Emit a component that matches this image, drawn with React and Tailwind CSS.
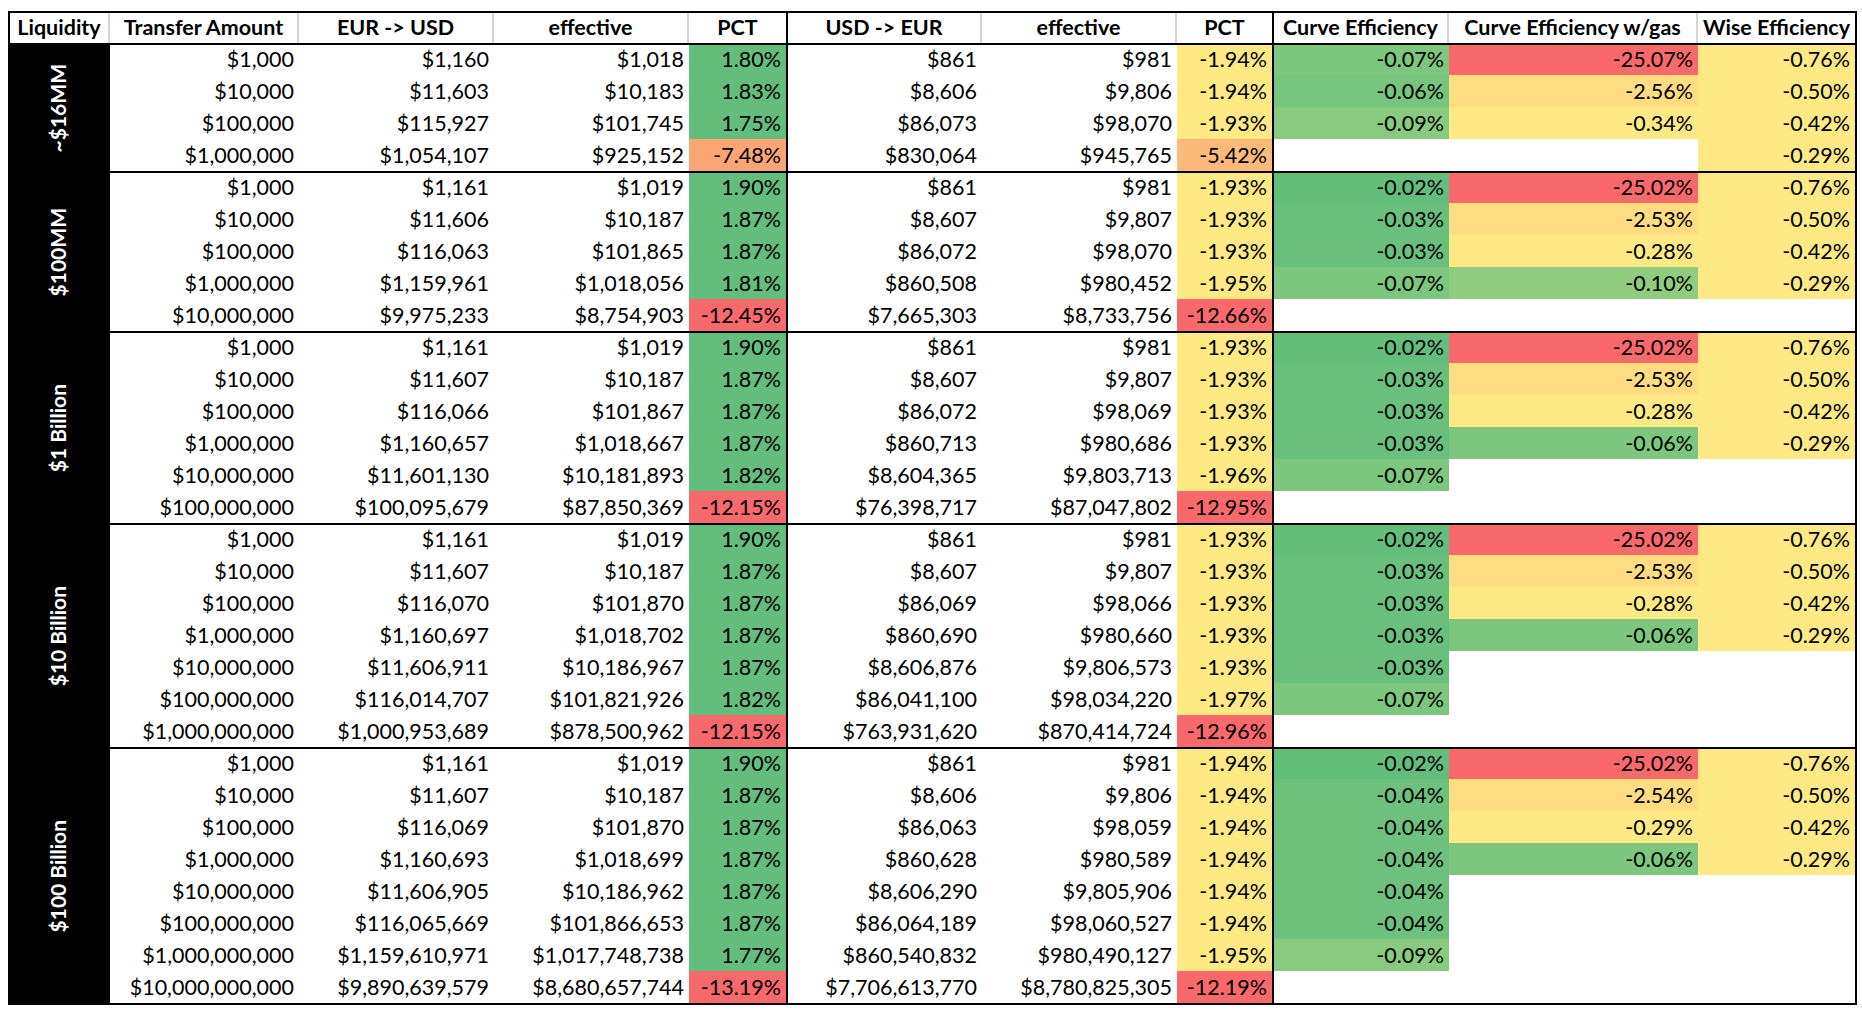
import React from 'react';

const G1 = 'bg-[#63be7b]';
const G2 = 'bg-[#69c07c]';
const G3 = 'bg-[#6ec17c]';
const G4 = 'bg-[#77c47d]';
const G5 = 'bg-[#7cc67d]';
const G6 = 'bg-[#88ca7e]';
const G7 = 'bg-[#90cc7e]';
const Y = 'bg-[#ffe984]';
const YO = 'bg-[#fedc81]';
const O1 = 'bg-[#f9a575]';
const O2 = 'bg-[#fbb97a]';
const R = 'bg-[#f8696b]';

const CURVE = { '-0.02%': G1, '-0.03%': G2, '-0.04%': G3, '-0.06%': G4, '-0.07%': G5, '-0.09%': G6 };
const GAS = {
  '-25.07%': R, '-25.02%': R, '-2.56%': YO, '-2.53%': YO, '-2.54%': YO,
  '-0.34%': Y, '-0.28%': Y, '-0.29%': Y, '-0.10%': G7, '-0.06%': G5,
};

function pct1(s) {
  const v = parseFloat(s);
  if (v > 0) return G1;
  if (v > -10) return O1;
  return R;
}
function pct2(s) {
  const v = parseFloat(s);
  if (v > -3) return Y;
  if (v > -10) return O2;
  return R;
}

const GROUPS = [
  {
    label: '~$16MM',
    rows: [
      ['$1,000', '$1,160', '$1,018', '1.80%', '$861', '$981', '-1.94%', '-0.07%', '-25.07%', '-0.76%'],
      ['$10,000', '$11,603', '$10,183', '1.83%', '$8,606', '$9,806', '-1.94%', '-0.06%', '-2.56%', '-0.50%'],
      ['$100,000', '$115,927', '$101,745', '1.75%', '$86,073', '$98,070', '-1.93%', '-0.09%', '-0.34%', '-0.42%'],
      ['$1,000,000', '$1,054,107', '$925,152', '-7.48%', '$830,064', '$945,765', '-5.42%', '', '', '-0.29%'],
    ],
  },
  {
    label: '$100MM',
    rows: [
      ['$1,000', '$1,161', '$1,019', '1.90%', '$861', '$981', '-1.93%', '-0.02%', '-25.02%', '-0.76%'],
      ['$10,000', '$11,606', '$10,187', '1.87%', '$8,607', '$9,807', '-1.93%', '-0.03%', '-2.53%', '-0.50%'],
      ['$100,000', '$116,063', '$101,865', '1.87%', '$86,072', '$98,070', '-1.93%', '-0.03%', '-0.28%', '-0.42%'],
      ['$1,000,000', '$1,159,961', '$1,018,056', '1.81%', '$860,508', '$980,452', '-1.95%', '-0.07%', '-0.10%', '-0.29%'],
      ['$10,000,000', '$9,975,233', '$8,754,903', '-12.45%', '$7,665,303', '$8,733,756', '-12.66%', '', '', ''],
    ],
  },
  {
    label: '$1 Billion',
    rows: [
      ['$1,000', '$1,161', '$1,019', '1.90%', '$861', '$981', '-1.93%', '-0.02%', '-25.02%', '-0.76%'],
      ['$10,000', '$11,607', '$10,187', '1.87%', '$8,607', '$9,807', '-1.93%', '-0.03%', '-2.53%', '-0.50%'],
      ['$100,000', '$116,066', '$101,867', '1.87%', '$86,072', '$98,069', '-1.93%', '-0.03%', '-0.28%', '-0.42%'],
      ['$1,000,000', '$1,160,657', '$1,018,667', '1.87%', '$860,713', '$980,686', '-1.93%', '-0.03%', '-0.06%', '-0.29%'],
      ['$10,000,000', '$11,601,130', '$10,181,893', '1.82%', '$8,604,365', '$9,803,713', '-1.96%', '-0.07%', '', ''],
      ['$100,000,000', '$100,095,679', '$87,850,369', '-12.15%', '$76,398,717', '$87,047,802', '-12.95%', '', '', ''],
    ],
  },
  {
    label: '$10 Billion',
    rows: [
      ['$1,000', '$1,161', '$1,019', '1.90%', '$861', '$981', '-1.93%', '-0.02%', '-25.02%', '-0.76%'],
      ['$10,000', '$11,607', '$10,187', '1.87%', '$8,607', '$9,807', '-1.93%', '-0.03%', '-2.53%', '-0.50%'],
      ['$100,000', '$116,070', '$101,870', '1.87%', '$86,069', '$98,066', '-1.93%', '-0.03%', '-0.28%', '-0.42%'],
      ['$1,000,000', '$1,160,697', '$1,018,702', '1.87%', '$860,690', '$980,660', '-1.93%', '-0.03%', '-0.06%', '-0.29%'],
      ['$10,000,000', '$11,606,911', '$10,186,967', '1.87%', '$8,606,876', '$9,806,573', '-1.93%', '-0.03%', '', ''],
      ['$100,000,000', '$116,014,707', '$101,821,926', '1.82%', '$86,041,100', '$98,034,220', '-1.97%', '-0.07%', '', ''],
      ['$1,000,000,000', '$1,000,953,689', '$878,500,962', '-12.15%', '$763,931,620', '$870,414,724', '-12.96%', '', '', ''],
    ],
  },
  {
    label: '$100 Billion',
    rows: [
      ['$1,000', '$1,161', '$1,019', '1.90%', '$861', '$981', '-1.94%', '-0.02%', '-25.02%', '-0.76%'],
      ['$10,000', '$11,607', '$10,187', '1.87%', '$8,606', '$9,806', '-1.94%', '-0.04%', '-2.54%', '-0.50%'],
      ['$100,000', '$116,069', '$101,870', '1.87%', '$86,063', '$98,059', '-1.94%', '-0.04%', '-0.29%', '-0.42%'],
      ['$1,000,000', '$1,160,693', '$1,018,699', '1.87%', '$860,628', '$980,589', '-1.94%', '-0.04%', '-0.06%', '-0.29%'],
      ['$10,000,000', '$11,606,905', '$10,186,962', '1.87%', '$8,606,290', '$9,805,906', '-1.94%', '-0.04%', '', ''],
      ['$100,000,000', '$116,065,669', '$101,866,653', '1.87%', '$86,064,189', '$98,060,527', '-1.94%', '-0.04%', '', ''],
      ['$1,000,000,000', '$1,159,610,971', '$1,017,748,738', '1.77%', '$860,540,832', '$980,490,127', '-1.95%', '-0.09%', '', ''],
      ['$10,000,000,000', '$9,890,639,579', '$8,680,657,744', '-13.19%', '$7,706,613,770', '$8,780,825,305', '-12.19%', '', '', ''],
    ],
  },
];

const W = [
  'w-[189px]', 'w-[195px]', 'w-[195px]', 'w-[99px]', 'w-[194px]',
  'w-[195px]', 'w-[97px]', 'w-[175px]', 'w-[249px]', 'w-[157px]',
];

const HEADERS = [
  'Transfer Amount', 'EUR -> USD', 'effective', 'PCT', 'USD -> EUR',
  'effective', 'PCT', 'Curve Efficiency', 'Curve Efficiency w/gas', 'Wise Efficiency',
];

function bgFor(i, v) {
  if (!v) return '';
  if (i === 3) return pct1(v);
  if (i === 6) return pct2(v);
  if (i === 7) return CURVE[v] || G3;
  if (i === 8) return GAS[v] || Y;
  if (i === 9) return Y;
  return '';
}

function borderFor(i) {
  if (i === 3 || i === 6) return 'border-r-2 border-black';
  return '';
}

function headerBorder(i) {
  if (i === 3 || i === 6) return 'border-r-2 border-black';
  if (i === 9) return '';
  return 'border-r-2 border-[#d6d6d6]';
}

function Row({ cells, first }) {
  return (
    <div className={`flex ${first ? 'h-[30px]' : 'h-[32px]'}`}>
      {cells.map((v, i) => (
        <div
          key={i}
          className={`${W[i]} ${bgFor(i, v)} ${borderFor(i)} shrink-0 flex items-end justify-end pr-[5px] pb-[3px] leading-[26px] whitespace-nowrap`}
        >
          {v}
        </div>
      ))}
    </div>
  );
}

function Group({ group }) {
  return (
    <div className="flex border-t-2 border-black">
      <div className="w-[100px] shrink-0 bg-black flex items-center justify-center pr-[4px]">
        <span className="[writing-mode:vertical-rl] rotate-180 text-white font-bold text-[21px] whitespace-nowrap leading-[24px]">
          {group.label}
        </span>
      </div>
      <div className="flex flex-col">
        {group.rows.map((r, i) => (
          <Row key={i} cells={r} first={i === 0} />
        ))}
      </div>
    </div>
  );
}

export default function App() {
  return (
    <div className="w-[1862px] h-[1018px] bg-white pt-[11px] pl-[8px] font-['Lato','Liberation_Sans',sans-serif] text-[21.5px] text-black overflow-hidden">
      <div className="w-[1849px] border-2 border-black">
        <div className="flex h-[30px] font-bold text-[21.5px]">
          <div className="w-[100px] shrink-0 border-r-2 border-[#d6d6d6] flex items-end justify-center pb-[3px] leading-[26px]">
            Liquidity
          </div>
          {HEADERS.map((h, i) => (
            <div
              key={i}
              className={`${W[i]} ${headerBorder(i)} shrink-0 flex items-end justify-center pb-[3px] leading-[26px] whitespace-nowrap overflow-hidden`}
            >
              {h}
            </div>
          ))}
        </div>
        {GROUPS.map((g, i) => (
          <Group key={i} group={g} />
        ))}
      </div>
    </div>
  );
}
